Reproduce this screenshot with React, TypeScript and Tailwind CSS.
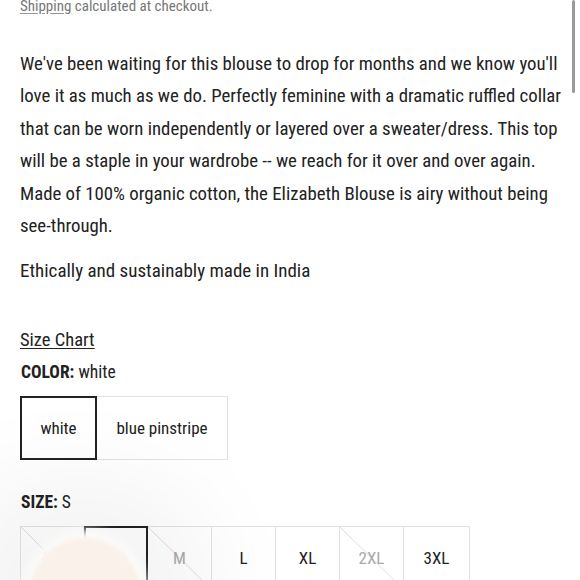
const font = { fontFamily: '"Roboto Condensed", "Liberation Sans Narrow", "DejaVu Sans Condensed", sans-serif' }

const sizes = [
  { label: 'XS', out: true },
  { label: 'S', selected: true },
  { label: 'M', out: true },
  { label: 'L' },
  { label: 'XL' },
  { label: '2XL', out: true },
  { label: '3XL', w: 'w-[66px]' },
]

function Cross() {
  return (
    <svg className="absolute inset-0 h-full w-full" preserveAspectRatio="none" viewBox="0 0 100 100">
      <line x1="0" y1="0" x2="100" y2="100" stroke="#dedede" strokeWidth="1" vectorEffect="non-scaling-stroke" />
    </svg>
  )
}

export default function App() {
  return (
    <div className="relative h-[580px] w-[580px] overflow-hidden bg-white text-[#222]" style={font}>
      <div className="absolute right-[5px] top-0 h-[93px] w-[3px] rounded-full bg-[#9a9a9a]" />
      <div className="pl-5 pr-3">
        <p className="-mt-[6px] text-[15px] leading-[24px] text-[#777]">
          <span className="underline decoration-[#999] underline-offset-2">Shipping</span> calculated at checkout.
        </p>
        <p className="mt-[30px] text-[18.8px] leading-[32.4px]">
          We've been waiting for this blouse to drop for months and we know you'll love it as much as we do.
          Perfectly feminine with a dramatic ruffled collar that can be worn independently or layered over a
          sweater/dress. This top will be a staple in your wardrobe -- we reach for it over and over again. Made of
          100% organic cotton, the Elizabeth Blouse is airy without being see-through.
        </p>
        <p className="mt-[13px] text-[19px] leading-[32px]">Ethically and sustainably made in India</p>
        <p className="mt-[41px] text-[18.5px] leading-[24px] underline underline-offset-2">Size Chart</p>
        <p className="mt-[8px] pl-[1px] text-[17.5px] leading-[24px]">
          <span className="font-bold">COLOR:</span> white
        </p>
        <div className="mt-[12px] flex">
          <div className="flex h-[64px] w-[77px] items-center justify-center border-2 border-[#222] text-[17px]">
            white
          </div>
          <div className="flex h-[64px] w-[131px] items-center justify-center border border-l-0 border-[#e2e2e2] text-[17px]">
            blue pinstripe
          </div>
        </div>
        <p className="mt-[30px] pl-[1px] text-[17.5px] leading-[24px]">
          <span className="font-bold">SIZE:</span> S
        </p>
        <div className="mt-[12px] flex">
          {sizes.map((s, i) => (
            <div
              key={s.label}
              className={
                'relative flex h-[64px] items-center justify-center text-[17px] ' +
                (s.w ?? 'w-[64px]') +
                ' ' +
                (s.selected
                  ? 'border-2 border-[#222]'
                  : i === 0
                  ? 'border border-[#e2e2e2]'
                  : 'border border-l-0 border-[#e2e2e2]') +
                (s.out ? ' text-[#aaa]' : ' text-[#222]')
              }
            >
              {s.out && <Cross />}
              <span className="relative">{s.label}</span>
            </div>
          ))}
        </div>
      </div>
      <div className="pointer-events-none absolute left-[-60px] top-[470px] h-[240px] w-[280px] rounded-full bg-black/[0.04] blur-[40px]" />
      <div className="pointer-events-none absolute left-[22px] top-[530px] h-[126px] w-[126px] rounded-full bg-[#fbfaf9] blur-[4px]" />
      <div className="pointer-events-none absolute left-[30px] top-[538px] h-[110px] w-[110px] rounded-full bg-[#faf1ea] blur-[1.5px]" />
    </div>
  )
}
